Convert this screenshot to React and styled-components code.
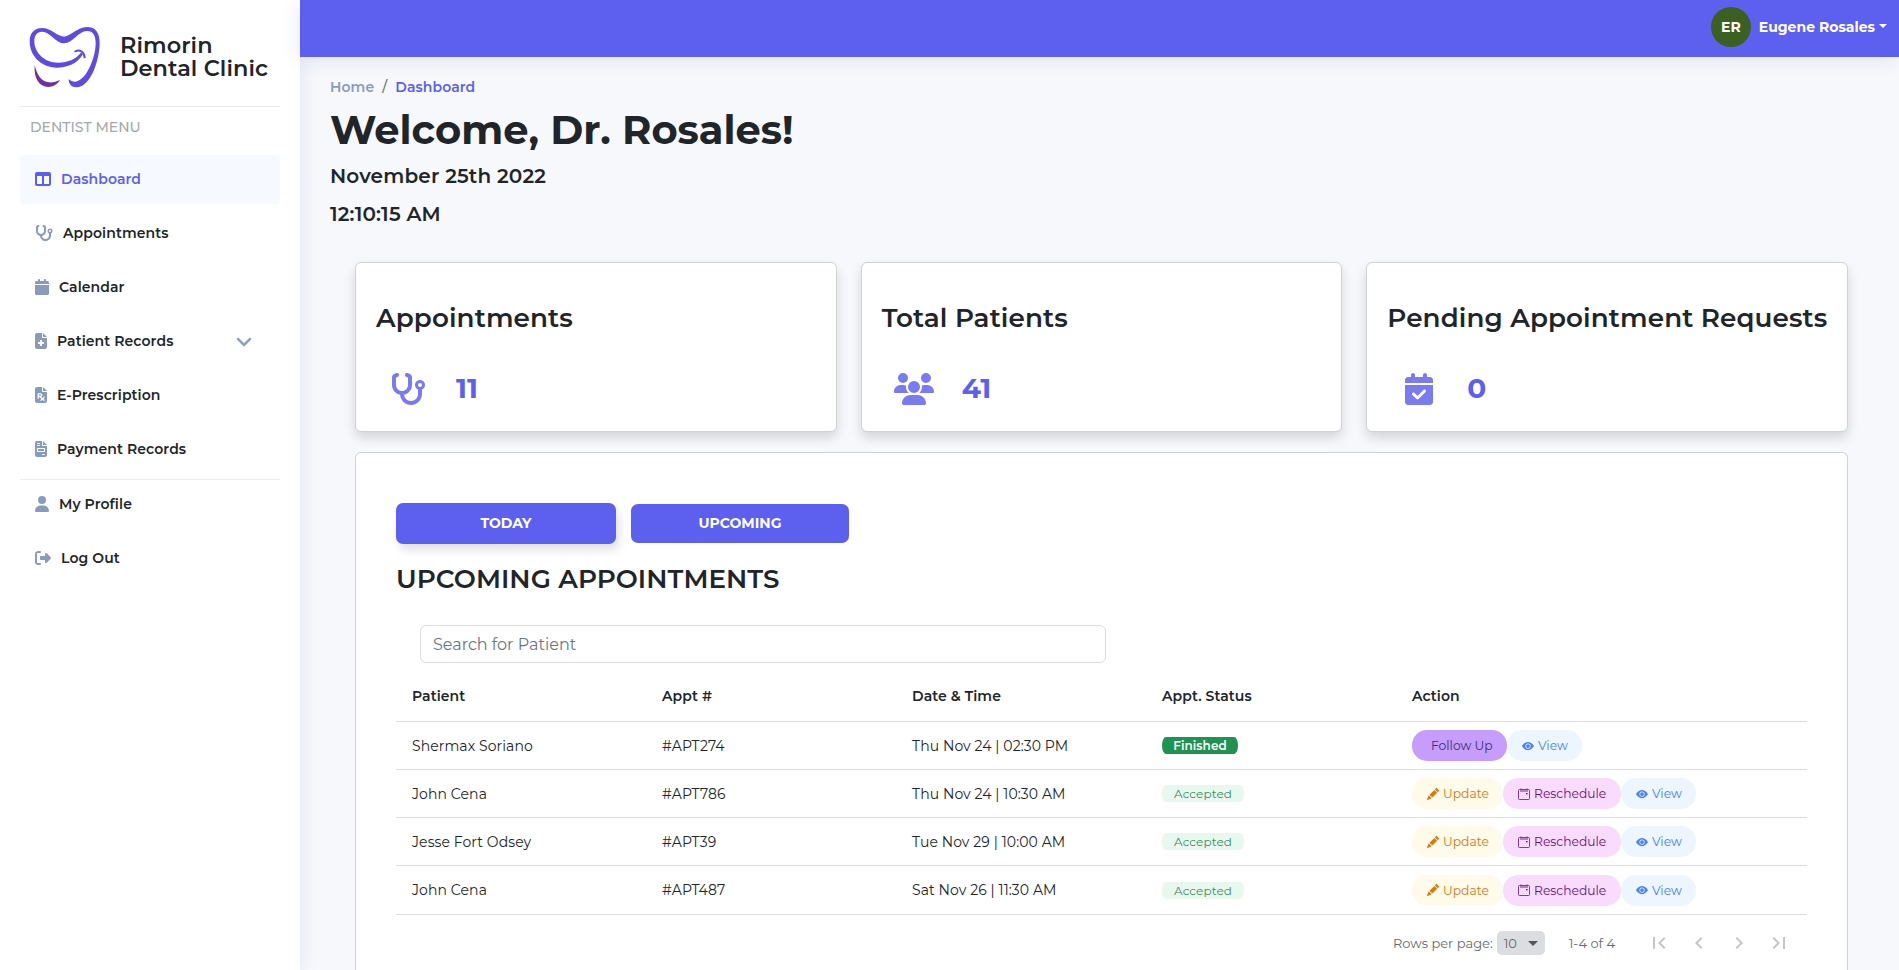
import React from "react";
import styled, { createGlobalStyle } from "styled-components";
import {
  FaTableColumns,
  FaStethoscope,
  FaCalendar,
  FaFileMedical,
  FaFilePrescription,
  FaFileInvoice,
  FaUser,
  FaRightFromBracket,
  FaChevronDown,
  FaUsers,
  FaCalendarCheck,
} from "react-icons/fa6";
import { BsEyeFill, BsPencilFill } from "react-icons/bs";
import {
  MdFirstPage,
  MdChevronLeft,
  MdChevronRight,
  MdLastPage,
  MdArrowDropDown,
} from "react-icons/md";

const brand = "#5d5fef";
const muted = "#899bbd";
const ink = "#212529";

const GlobalStyle = createGlobalStyle`
  *, *::before, *::after { box-sizing: border-box; }
  html, body { margin: 0; background: #f6f8fc; }
  body {
    font-family: Montserrat, Inter, "Open Sans", sans-serif;
    font-size: 14px;
    letter-spacing: 0.09px;
    color: ${ink};
    overflow: hidden;
  }
  svg { display: block; flex-shrink: 0; }
  h1, h2, h3, p { margin: 0; }
`;

const Page = styled.div`
  display: flex;
  height: 100vh;
  overflow: hidden;
`;

const Label = styled.span`
  white-space: nowrap;
`;

/* Sidebar */

const Sidebar = styled.aside`
  position: relative;
  z-index: 1;
  flex: 0 0 300px;
  min-width: 0;
  padding: 27px 20px 0;
  background: #fff;
  box-shadow: 0 0 20px rgba(1, 41, 112, 0.1);
`;

const Brand = styled.div`
  display: flex;
  align-items: center;
  gap: 19px;
  height: 60px;
  padding-left: 9px;
`;

const BrandName = styled.div`
  display: flex;
  flex-direction: column;
  font-size: 22.4px;
  font-weight: 600;
  line-height: 23px;
`;

const Divider = styled.hr`
  height: 1px;
  margin: ${(p) => p.$top}px 0 0;
  border: 0;
  background: #ebebed;
`;

const MenuCaption = styled.p`
  padding: 10px 0 17px 10px;
  font-weight: 500;
  letter-spacing: 0;
  line-height: 21px;
  color: #a5a8ab;
`;

const Nav = styled.nav`
  display: flex;
  flex-direction: column;
  gap: 5px;
`;

const NavItem = styled.a`
  display: flex;
  align-items: center;
  gap: 10px;
  height: 49px;
  padding: 0 28px 1px 15px;
  border-radius: 4px;
  font-weight: 600;
  color: ${(p) => (p.$active ? brand : ink)};
  background: ${(p) => (p.$active ? "#f6f9ff" : "transparent")};

  svg {
    height: 16px;
    color: ${(p) => (p.$active ? brand : muted)};
  }
`;

const NavIcon = styled.span`
  svg {
    width: ${(p) => p.$w}px;
  }
`;

const NavArrow = styled(FaChevronDown)`
  width: 16px;
  margin-left: auto;
  stroke: currentColor;
  stroke-width: 16;
`;

/* Header */

const Body = styled.div`
  flex: 1;
  min-width: 0;
  display: flex;
  flex-direction: column;
`;

const Header = styled.header`
  position: relative;
  z-index: 2;
  flex: 0 0 57px;
  display: flex;
  align-items: center;
  justify-content: flex-end;
  padding: 0 12px 3px 0;
  background: ${brand};
  box-shadow: 0 2px 20px rgba(1, 41, 112, 0.1);
  color: #fff;
  font-weight: 700;
  letter-spacing: 0;
`;

const Avatar = styled.div`
  display: grid;
  place-items: center;
  width: 40px;
  height: 40px;
  margin-right: 8px;
  border-radius: 50%;
  background: #3c6022;
`;

const Caret = styled.span`
  margin: -2px 0 0 4px;
  border: 4px solid transparent;
  border-top-color: #fff;
  border-bottom: 0;
`;

/* Content */

const Main = styled.main`
  flex: 1;
  min-height: 0;
  display: flex;
  flex-direction: column;
  padding: 20px 51px 0 30px;
`;

const Breadcrumb = styled.div`
  display: flex;
  gap: 8px;
  line-height: 20px;
  font-weight: 600;
  color: ${muted};

  span:nth-child(2) {
    font-weight: 500;
    color: #6c757d;
  }
  span:nth-child(3) {
    color: ${brand};
  }
`;

const Greeting = styled.h1`
  margin-top: 9px;
  font-size: 40px;
  line-height: 48px;
  font-weight: 700;
  letter-spacing: 0;
`;

const Stamp = styled.p`
  margin-top: ${(p) => p.$top}px;
  font-size: 20px;
  line-height: 24px;
  font-weight: 600;
  letter-spacing: 0.17px;
`;

const Dashboard = styled.section`
  flex: 1;
  min-height: 0;
  display: flex;
  flex-direction: column;
  gap: 20px;
  margin: 36px 0 0 25px;
`;

const Cards = styled.div`
  display: grid;
  grid-template-columns: repeat(3, minmax(0, 1fr));
  gap: 24px;
`;

const Card = styled.article`
  height: 170px;
  padding: 40px 20px 0;
  border: 1px solid #d0d2d5;
  border-radius: 6px;
  background: #fff;
  box-shadow: 0 6px 12px rgba(0, 0, 0, 0.14);
`;

const Title = styled.h2`
  font-size: 26.2px;
  line-height: 31px;
  font-weight: 600;
  letter-spacing: ${(p) => (p.$caps ? 0.06 : 0.12)}px;
  white-space: nowrap;
`;

const Metric = styled.div`
  display: flex;
  align-items: center;
  margin-top: 39px;
  font-size: 28px;
  line-height: 32px;
  font-weight: 700;
  letter-spacing: 0;
  color: ${brand};

  ${Label} {
    margin-top: -3px;
  }
`;

const MetricIcon = styled.span`
  display: flex;
  justify-content: center;
  width: 64px;
  margin-right: 16px;
  opacity: 0.82;

  svg {
    width: ${(p) => p.$w}px;
    height: 32px;
  }
`;

const Panel = styled.section`
  flex: 1;
  min-height: 0;
  overflow: hidden;
  padding: 50px 40px 0;
  border: 1px solid #d0d2d5;
  border-bottom: 0;
  border-radius: 6px 6px 0 0;
  background: #fff;
`;

const Tabs = styled.div`
  display: flex;
  align-items: center;
  gap: 15px;
  margin-bottom: 20px;
`;

const Tab = styled.button`
  width: ${(p) => (p.$active ? 220 : 218)}px;
  height: ${(p) => (p.$active ? 41 : 39)}px;
  padding: 0 0 1px;
  border: 0;
  border-radius: 7px;
  background: ${brand};
  box-shadow: ${(p) => (p.$active ? "3px 6px 10px rgba(0, 0, 0, 0.12)" : "none")};
  color: #fff;
  font: inherit;
  font-weight: 700;
`;

const Search = styled.input`
  display: block;
  width: 686px;
  height: 38px;
  margin: 30px 0 8px 24px;
  padding: 0 12px;
  border: 1px solid #dcdee1;
  border-radius: 6px;
  outline: 0;
  font: inherit;
  font-size: 16px;

  &::placeholder {
    color: #6c757d;
    opacity: 1;
  }
`;

const Row = styled.div`
  display: grid;
  grid-template-columns: repeat(4, 250px) 1fr;
  align-items: center;
  height: ${(p) => p.$h || 48}px;
  padding-left: 16px;
  border-bottom: 1px solid #dedede;
  font-weight: ${(p) => (p.$head ? 600 : 400)};
`;

const Badge = styled.span`
  display: flex;
  align-items: center;
  justify-content: center;
  width: ${(p) => (p.$done ? 76 : 82)}px;
  height: 17px;
  border-radius: 4px / 8.5px;
  background: ${(p) => (p.$done ? "#209353" : "#e9f8ef")};
  color: ${(p) => (p.$done ? "#fff" : "#3a8d5d")};
  font-size: 12px;
  font-weight: ${(p) => (p.$done ? 600 : 400)};
`;

const Actions = styled.div`
  display: flex;
`;

const tones = {
  follow: ["#c69dfd", "#3b2f6e", 95],
  view: ["#edf5ff", "#4680f6", 75],
  update: ["#fffaea", "#d97812", 91],
  reschedule: ["#f8dbfd", "#6b1079", 118],
};

const Pill = styled.button`
  display: flex;
  align-items: center;
  gap: 4px;
  width: ${(p) => tones[p.$tone][2]}px;
  height: 31px;
  padding: 0 0 0 ${(p) => (p.$tone === "follow" ? 19 : 15)}px;
  border: 0;
  border-radius: 15px;
  background: ${(p) => tones[p.$tone][0]};
  color: ${(p) => tones[p.$tone][1]};
  font: inherit;
  font-size: 12.3px;

  svg {
    width: 12px;
    height: 12px;
  }
`;

const Pagination = styled.footer`
  display: flex;
  align-items: center;
  justify-content: flex-end;
  height: 56px;
  padding: 0 8px 1px 0;
  font-size: 13px;
  letter-spacing: 0;
  color: #66696d;
`;

const PageSize = styled.div`
  display: flex;
  align-items: center;
  justify-content: space-between;
  width: 48px;
  height: 24px;
  margin: 0 24px 0 4px;
  padding: 1px 0 0 7px;
  border-radius: 5px;
  background: #dcdde1;

  svg {
    width: 24px;
    height: 24px;
    color: #54575a;
  }
`;

const PageButton = styled.button`
  display: grid;
  place-items: center;
  width: 40px;
  height: 40px;
  padding: 0;
  border: 0;
  background: none;
  color: #c6c6c6;

  svg {
    width: 24px;
    height: 24px;
  }
`;

const PageButtons = styled.div`
  display: flex;
  margin-left: 24px;
`;

function Logo() {
  return (
    <svg width="72" height="62" viewBox="88 78 216 186">
      <path
        fill="#5f4be0"
        d="M250 162C232 195 195 204 168 203C120 200 90 165 90 124C90 98 105 84 127 84C155 84 170 108 193 110C215 108 232 81 262 81C288 81 300 98 300 130C300 175 275 262 230 262C215 262 207 252 207 238C213 242 220 246 228 245C262 240 288 170 288 130C288 106 280 93 262 93C235 93 222 129 193 130C168 130 152 95 127 95C112 95 103 106 104 126C106 160 135 188 175 188C205 188 232 175 243 158Z"
      />
      <path
        fill="none"
        stroke="#5f4be0"
        strokeWidth="6"
        strokeLinecap="round"
        d="M227 154C240 148 253 155 255 172"
      />
      <path
        fill="#7030a0"
        d="M105 195C112 225 125 245 148 247C160 248 172 244 182 240C172 254 160 261 146 261C118 260 102 235 105 195Z"
      />
    </svg>
  );
}

function RescheduleIcon() {
  return (
    <svg viewBox="0 0 12 12" fill="none" stroke="currentColor">
      <rect x="0.5" y="1.5" width="11" height="10" rx="1" strokeWidth="0.8" />
      <path d="M2 3h8" strokeWidth="0.9" />
      <path d="M3 0.4v1M9 0.4v1" strokeWidth="0.8" />
      <path d="M8 5.6h1.6" strokeWidth="1.4" />
    </svg>
  );
}

const menu = [
  { label: "Dashboard", icon: FaTableColumns, w: 16, active: true },
  { label: "Appointments", icon: FaStethoscope, w: 18 },
  { label: "Calendar", icon: FaCalendar, w: 14 },
  { label: "Patient Records", icon: FaFileMedical, w: 12, expandable: true },
  { label: "E-Prescription", icon: FaFilePrescription, w: 12 },
  { label: "Payment Records", icon: FaFileInvoice, w: 12 },
];

const accountMenu = [
  { label: "My Profile", icon: FaUser, w: 14 },
  { label: "Log Out", icon: FaRightFromBracket, w: 16 },
];

const metrics = [
  { title: "Appointments", icon: FaStethoscope, w: 36, value: "11" },
  { title: "Total Patients", icon: FaUsers, w: 40, value: "41" },
  { title: "Pending Appointment Requests", icon: FaCalendarCheck, w: 28, value: "0" },
];

const columns = ["Patient", "Appt #", "Date & Time", "Appt. Status", "Action"];

const appointments = [
  { patient: "Shermax Soriano", id: "#APT274", when: "Thu Nov 24 | 02:30 PM", done: true },
  { patient: "John Cena", id: "#APT786", when: "Thu Nov 24 | 10:30 AM" },
  { patient: "Jesse Fort Odsey", id: "#APT39", when: "Tue Nov 29 | 10:00 AM" },
  { patient: "John Cena", id: "#APT487", when: "Sat Nov 26 | 11:30 AM" },
];

function MenuList({ items }) {
  return (
    <Nav>
      {items.map(({ label, icon: Icon, w, active, expandable }) => (
        <NavItem key={label} $active={active}>
          <NavIcon $w={w}>
            <Icon />
          </NavIcon>
          <Label>{label}</Label>
          {expandable && <NavArrow />}
        </NavItem>
      ))}
    </Nav>
  );
}

function AppointmentRow({ row, last }) {
  return (
    <Row $h={last ? 49 : 48}>
      <Label>{row.patient}</Label>
      <Label>{row.id}</Label>
      <Label>{row.when}</Label>
      <Badge $done={row.done}>{row.done ? "Finished" : "Accepted"}</Badge>
      <Actions>
        {row.done ? (
          <Pill $tone="follow">
            <Label>Follow Up</Label>
          </Pill>
        ) : (
          <>
            <Pill $tone="update">
              <BsPencilFill />
              <Label>Update</Label>
            </Pill>
            <Pill $tone="reschedule">
              <RescheduleIcon />
              <Label>Reschedule</Label>
            </Pill>
          </>
        )}
        <Pill $tone="view">
          <BsEyeFill />
          <Label>View</Label>
        </Pill>
      </Actions>
    </Row>
  );
}

export default function App() {
  return (
    <Page>
      <GlobalStyle />
      <Sidebar>
        <Brand>
          <Logo />
          <BrandName>
            <Label>Rimorin</Label>
            <Label>Dental Clinic</Label>
          </BrandName>
        </Brand>
        <Divider $top={19} />
        <MenuCaption>DENTIST MENU</MenuCaption>
        <MenuList items={menu} />
        <Divider $top={5} />
        <MenuList items={accountMenu} />
      </Sidebar>
      <Body>
        <Header>
          <Avatar>ER</Avatar>
          <Label>Eugene Rosales</Label>
          <Caret />
        </Header>
        <Main>
          <Breadcrumb>
            <Label>Home</Label>
            <Label>/</Label>
            <Label>Dashboard</Label>
          </Breadcrumb>
          <Greeting>Welcome, Dr. Rosales!</Greeting>
          <Stamp $top={10}>November 25th 2022</Stamp>
          <Stamp $top={14}>12:10:15 AM</Stamp>
          <Dashboard>
            <Cards>
              {metrics.map(({ title, icon: Icon, w, value }) => (
                <Card key={title}>
                  <Title>{title}</Title>
                  <Metric>
                    <MetricIcon $w={w}>
                      <Icon />
                    </MetricIcon>
                    <Label>{value}</Label>
                  </Metric>
                </Card>
              ))}
            </Cards>
            <Panel>
              <Tabs>
                <Tab $active>TODAY</Tab>
                <Tab>UPCOMING</Tab>
              </Tabs>
              <Title $caps>UPCOMING APPOINTMENTS</Title>
              <Search placeholder="Search for Patient" />
              <Row $head $h={51}>
                {columns.map((name) => (
                  <Label key={name}>{name}</Label>
                ))}
              </Row>
              {appointments.map((row, i) => (
                <AppointmentRow key={row.id} row={row} last={i === appointments.length - 1} />
              ))}
              <Pagination>
                <Label>Rows per page:</Label>
                <PageSize>
                  <Label>10</Label>
                  <MdArrowDropDown />
                </PageSize>
                <Label>1-4 of 4</Label>
                <PageButtons>
                  <PageButton><MdFirstPage /></PageButton>
                  <PageButton><MdChevronLeft /></PageButton>
                  <PageButton><MdChevronRight /></PageButton>
                  <PageButton><MdLastPage /></PageButton>
                </PageButtons>
              </Pagination>
            </Panel>
          </Dashboard>
        </Main>
      </Body>
    </Page>
  );
}
